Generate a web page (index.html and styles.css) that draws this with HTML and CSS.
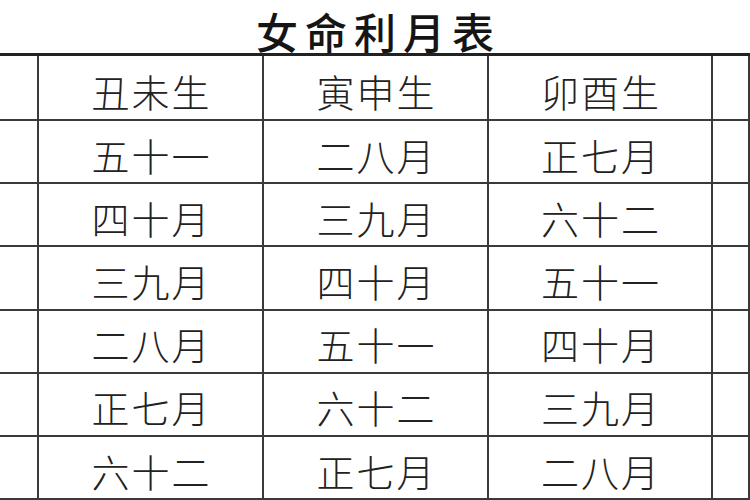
FILE: index.html
```html
<!DOCTYPE html>
<html lang="zh">
<head>
<meta charset="utf-8">
<title>女命利月表</title>
<link rel="stylesheet" href="styles.css">
</head>
<body>
<div class="page">
  <h1 class="title">女命利月表</h1>
  <div class="table">
    <div class="cell"></div><div class="cell">丑未生</div><div class="cell">寅申生</div><div class="cell">卯酉生</div><div class="cell"></div>
    <div class="cell"></div><div class="cell">五十一</div><div class="cell">二八月</div><div class="cell">正七月</div><div class="cell"></div>
    <div class="cell"></div><div class="cell">四十月</div><div class="cell">三九月</div><div class="cell">六十二</div><div class="cell"></div>
    <div class="cell"></div><div class="cell">三九月</div><div class="cell">四十月</div><div class="cell">五十一</div><div class="cell"></div>
    <div class="cell"></div><div class="cell">二八月</div><div class="cell">五十一</div><div class="cell">四十月</div><div class="cell"></div>
    <div class="cell"></div><div class="cell">正七月</div><div class="cell">六十二</div><div class="cell">三九月</div><div class="cell"></div>
    <div class="cell"></div><div class="cell">六十二</div><div class="cell">正七月</div><div class="cell">二八月</div><div class="cell"></div>
  </div>
</div>
</body>
</html>
```
FILE: styles.css
```css
html, body {
  margin: 0;
  padding: 0;
  background: #ffffff;
}
body {
  width: 750px;
  height: 500px;
  overflow: hidden;
  font-family: "Noto Sans CJK SC", "Noto Sans CJK JP", sans-serif;
  color: #1c1c1c;
}
.page {
  display: flex;
  flex-direction: column;
}
.title {
  margin: 0;
  height: 53px;
  box-sizing: border-box;
  padding: 0 0 0 7px;
  font-size: 42px;
  line-height: 61px;
  font-weight: 500;
  letter-spacing: 7px;
  text-align: center;
  color: #151515;
}
.table {
  display: grid;
  grid-template-columns: 39px 225px 225px 224px 1fr;
  grid-template-rows: 65px;
  grid-auto-rows: 63.2px;
  border-top: 3px solid #222222;
}
.cell {
  box-sizing: border-box;
  border-right: 2px solid #3a3a3a;
  border-bottom: 2px solid #3a3a3a;
  display: flex;
  align-items: center;
  justify-content: center;
  padding: 6px 0 0 2px;
  font-size: 38px;
  line-height: 38px;
  font-weight: 300;
  letter-spacing: 2px;
  color: #222222;
}
```
